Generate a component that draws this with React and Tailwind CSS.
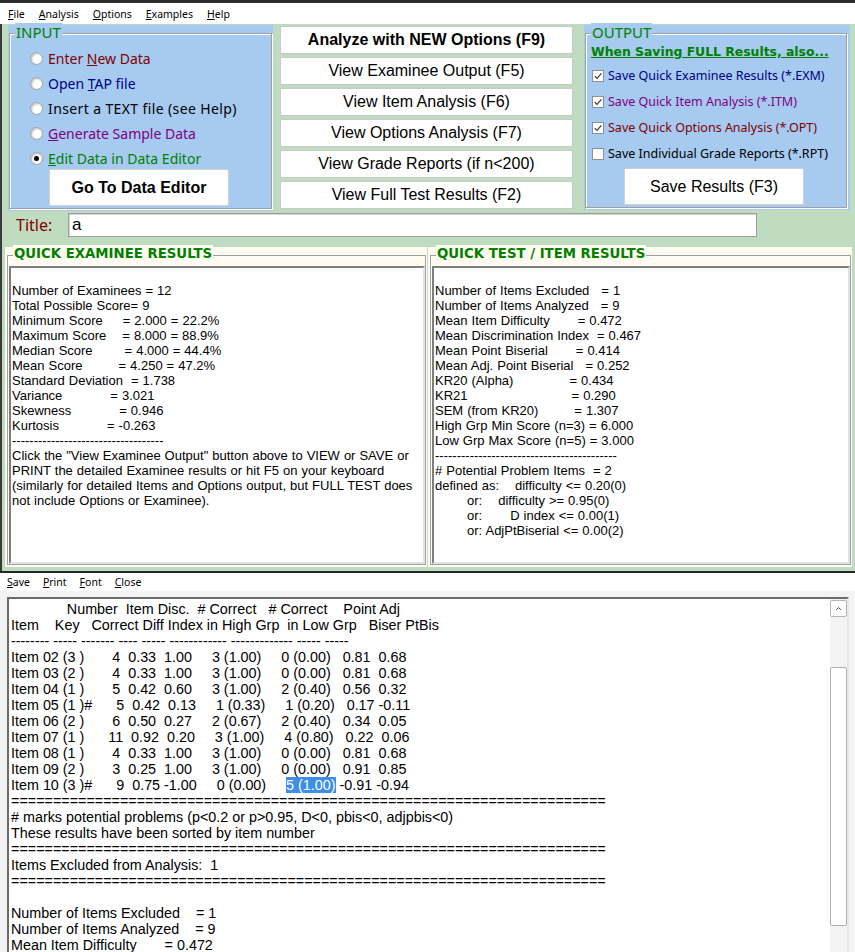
import React from "react";

const sp = (n) => " ".repeat(n);

const examLines = [
  "",
  "Number of Examinees = 12",
  "Total Possible Score= 9",
  "Minimum Score" + sp(5) + "= 2.000 = 22.2%",
  "Maximum Score" + sp(4) + "= 8.000 = 88.9%",
  "Median Score" + sp(8) + "= 4.000 = 44.4%",
  "Mean Score" + sp(9) + "= 4.250 = 47.2%",
  "Standard Deviation" + sp(2) + "= 1.738",
  "Variance" + sp(12) + "= 3.021",
  "Skewness" + sp(12) + "= 0.946",
  "Kurtosis" + sp(12) + "= -0.263",
  "-".repeat(35),
  'Click the "View Examinee Output" button above to VIEW or SAVE or',
  "PRINT the detailed Examinee results or hit F5 on your keyboard",
  "(similarly for detailed Items and Options output, but FULL TEST does",
  "not include Options or Examinee).",
];

const testLines = [
  "",
  "Number of Items Excluded" + sp(3) + "= 1",
  "Number of Items Analyzed" + sp(3) + "= 9",
  "Mean Item Difficulty" + sp(7) + "= 0.472",
  "Mean Discrimination Index" + sp(2) + "= 0.467",
  "Mean Point Biserial" + sp(7) + "= 0.414",
  "Mean Adj. Point Biserial" + sp(3) + "= 0.252",
  "KR20 (Alpha)" + sp(14) + "= 0.434",
  "KR21" + sp(26) + "= 0.290",
  "SEM (from KR20)" + sp(9) + "= 1.307",
  "High Grp Min Score (n=3)" + sp(1) + "= 6.000",
  "Low Grp Max Score (n=5)" + sp(1) + "= 3.000",
  "-".repeat(42),
  "# Potential Problem Items" + sp(2) + "= 2",
  "defined as:" + sp(4) + "difficulty <= 0.20(0)",
  sp(8) + "or:" + sp(4) + "difficulty >= 0.95(0)",
  sp(8) + "or:" + sp(7) + "D index <= 0.00(1)",
  sp(8) + "or: AdjPtBiserial <= 0.00(2)",
];

const eq = "=".repeat(71);

const reportLines = [
  sp(14) + "Number" + sp(2) + "Item Disc." + sp(2) + "# Correct" + sp(3) + "# Correct" + sp(4) + "Point Adj",
  "Item" + sp(4) + "Key" + sp(3) + "Correct Diff Index in High Grp" + sp(2) + "in Low Grp" + sp(3) + "Biser PtBis",
  "-------- ----- ------- ---- ----- ------------ ------------- ----- -----",
  "Item 02 (3 )" + sp(7) + "4  0.33  1.00" + sp(5) + "3 (1.00)" + sp(5) + "0 (0.00)   0.81  0.68",
  "Item 03 (2 )" + sp(7) + "4  0.33  1.00" + sp(5) + "3 (1.00)" + sp(5) + "0 (0.00)   0.81  0.68",
  "Item 04 (1 )" + sp(7) + "5  0.42  0.60" + sp(5) + "3 (1.00)" + sp(5) + "2 (0.40)   0.56  0.32",
  "Item 05 (1 )#" + sp(6) + "5  0.42  0.13" + sp(5) + "1 (0.33)" + sp(5) + "1 (0.20)   0.17 -0.11",
  "Item 06 (2 )" + sp(7) + "6  0.50  0.27" + sp(5) + "2 (0.67)" + sp(5) + "2 (0.40)   0.34  0.05",
  "Item 07 (1 )" + sp(6) + "11  0.92  0.20" + sp(5) + "3 (1.00)" + sp(5) + "4 (0.80)   0.22  0.06",
  "Item 08 (1 )" + sp(7) + "4  0.33  1.00" + sp(5) + "3 (1.00)" + sp(5) + "0 (0.00)   0.81  0.68",
  "Item 09 (2 )" + sp(7) + "3  0.25  1.00" + sp(5) + "3 (1.00)" + sp(5) + "0 (0.00)   0.91  0.85",
  "HL",
  eq,
  "# marks potential problems (p<0.2 or p>0.95, D<0, pbis<0, adjpbis<0)",
  "These results have been sorted by item number",
  eq,
  "Items Excluded from Analysis:  1",
  eq,
  "",
  "Number of Items Excluded" + sp(4) + "= 1",
  "Number of Items Analyzed" + sp(4) + "= 9",
  "Mean Item Difficulty" + sp(7) + "= 0.472",
  "Mean Discrimination Index" + sp(2) + "= 0.467",
  "Mean Point Biserial" + sp(8) + "= 0.414",
];

function Radio({ on }) {
  return (
    <span className="flex h-[13px] w-[13px] shrink-0 items-center justify-center rounded-full border border-[#a3a3a3] bg-white shadow-[inset_1px_1px_2px_#bdbdbd]">
      {on && <span className="h-[5px] w-[5px] rounded-full bg-black" />}
    </span>
  );
}

function Check({ on }) {
  return (
    <span className="flex h-[12px] w-[12px] shrink-0 items-center justify-center border border-[#8f8f8f] bg-white">
      {on && (
        <svg width="10" height="10" viewBox="0 0 10 10">
          <path d="M1.8 5.2 L4 7.4 L8.4 2.4" fill="none" stroke="#333" strokeWidth="1.1" />
        </svg>
      )}
    </span>
  );
}

function Group({ title, bg, titleClass, outerClass, innerClass, children }) {
  return (
    <div className={`${bg} ${outerClass}`}>
      <div className={`relative h-full border border-[#a0a0a0] shadow-[inset_1px_1px_0_#ffffff,1px_1px_0_#ffffff] ${innerClass}`}>
        <span className={`absolute left-[5px] top-[-11px] px-[1px] ${bg} ${titleClass}`}>{title}</span>
        {children}
      </div>
    </div>
  );
}

function MenuItem({ first, rest }) {
  return (
    <span>
      <span className="underline underline-offset-[1px]">{first}</span>
      {rest}
    </span>
  );
}

function RadioRow({ on, color, children }) {
  return (
    <div className="flex h-[25px] items-center gap-[5px]">
      <Radio on={on} />
      <span className={`text-[14px] leading-[18px] ${color}`}>{children}</span>
    </div>
  );
}

function CheckRow({ on, color, children }) {
  return (
    <div className="ml-[1px] flex h-[26px] items-center gap-[4px]">
      <Check on={on} />
      <span className={`text-[12.5px] leading-[16px] ${color}`}>{children}</span>
    </div>
  );
}

function MidButton({ bold, children }) {
  return (
    <div
      className={`flex h-[28px] items-center justify-center rounded-[2px] border border-[#c9c9c9] bg-white text-[16px] leading-[18px] text-black font-['Liberation_Sans',Arial,sans-serif] ${bold ? "font-bold" : ""}`}
    >
      {children}
    </div>
  );
}

function QuickPanel({ title, lines, outerClass }) {
  return (
    <Group
      title={title}
      bg="bg-[#fffbf0]"
      outerClass={`h-[320px] pt-[8px] pl-[2px] pr-[1px] pb-[2px] ${outerClass}`}
      innerClass="pt-[10px] pl-[1px] pr-[0px] pb-[0px] flex flex-col"
      titleClass="font-['DejaVu_Sans',sans-serif] font-bold text-[13.3px] leading-[18px] text-[#008000] top-[-10px]"
    >
      <div className="flex-1 overflow-hidden border-2 border-t-[#7e7e7e] border-l-[#7e7e7e] border-b-[#e2e2e2] border-r-[#e2e2e2] bg-white pl-[1px] font-['Liberation_Sans',Arial,sans-serif] text-[13px] leading-[15px] text-black [word-spacing:0.39px]">
        {lines.map((l, i) => (
          <div key={i} className="h-[15px] whitespace-pre">
            {l}
          </div>
        ))}
      </div>
    </Group>
  );
}

export default function App() {
  return (
    <div className="flex h-[952px] w-[855px] flex-col overflow-hidden bg-white font-['Noto_Sans',sans-serif]">
      <div className="h-[3px] shrink-0 bg-[#2e2e2e]" />
      {/* top menu */}
      <div className="flex h-[21px] shrink-0 items-center gap-[14px] bg-white pl-[8px] pt-[1px] text-[10.5px] leading-[14px] text-black">
        <MenuItem first="F" rest="ile" />
        <MenuItem first="A" rest="nalysis" />
        <MenuItem first="O" rest="ptions" />
        <MenuItem first="E" rest="xamples" />
        <MenuItem first="H" rest="elp" />
      </div>

      {/* main window */}
      <div className="flex h-[547px] shrink-0 flex-col border-l-2 border-[#3a3a3a] bg-[#c0dcc0]">
        <div className="flex items-start pt-[1px]">
          {/* INPUT */}
          <Group
            title="INPUT"
            bg="bg-[#a6caf0]"
            outerClass="ml-[6px] h-[186px] w-[265px] pt-[8px] pl-[1px] pr-[1px] pb-[2px]"
            innerClass="pt-[12px] pl-[20px]"
            titleClass="text-[15px] leading-[18px] text-[#008000]"
          >
            <RadioRow color="text-[#800000]">
              Enter <span className="underline">N</span>ew Data
            </RadioRow>
            <RadioRow color="text-[#000080]">
              Open <span className="underline">T</span>AP file
            </RadioRow>
            <RadioRow color="text-black tracking-[0.38px]">Insert a TEXT file (see Help)</RadioRow>
            <RadioRow color="text-[#800080]">
              <span className="underline">G</span>enerate Sample Data
            </RadioRow>
            <RadioRow on color="text-[#008000]">
              <span className="underline">E</span>dit Data in Data Editor
            </RadioRow>
            <div className="ml-[19px] mt-[-2px] flex h-[37px] w-[180px] items-center justify-center rounded-[2px] border border-[#d0d0d0] bg-white font-['Liberation_Sans',Arial,sans-serif] text-[16px] font-bold text-black">
              Go To Data Editor
            </div>
          </Group>

          {/* buttons */}
          <div className="ml-[7px] flex w-[293px] flex-col gap-[3px] pt-[1px]">
            <MidButton bold>Analyze with NEW Options (F9)</MidButton>
            <MidButton>View Examinee Output (F5)</MidButton>
            <MidButton>View Item Analysis (F6)</MidButton>
            <MidButton>View Options Analysis (F7)</MidButton>
            <MidButton>View Grade Reports (if n&lt;200)</MidButton>
            <MidButton>View Full Test Results (F2)</MidButton>
          </div>

          {/* OUTPUT */}
          <Group
            title="OUTPUT"
            bg="bg-[#a6caf0]"
            outerClass="ml-[11px] h-[185px] w-[266px] pt-[8px] pl-[1px] pr-[3px] pb-[2px]"
            innerClass="pt-[7px] pl-[5px]"
            titleClass="text-[15px] leading-[18px] text-[#008000]"
          >
            <div className="flex h-[22px] items-center font-['DejaVu_Sans',sans-serif] text-[12.4px] font-bold text-[#008000] underline">
              When Saving FULL Results, also...
            </div>
            <CheckRow on color="text-[#000080]">Save Quick Examinee Results (*.EXM)</CheckRow>
            <CheckRow on color="text-[#800080]">Save Quick Item Analysis (*.ITM)</CheckRow>
            <CheckRow on color="text-[#800000]">Save Quick Options Analysis (*.OPT)</CheckRow>
            <CheckRow color="text-black">Save Individual Grade Reports (*.RPT)</CheckRow>
            <div className="ml-[33px] mt-[1px] flex h-[37px] w-[180px] items-center justify-center rounded-[2px] border border-[#d0d0d0] bg-white font-['Liberation_Sans',Arial,sans-serif] text-[16px] text-black">
              Save Results (F3)
            </div>
          </Group>
        </div>

        {/* title row */}
        <div className="mt-[2px] flex h-[24px] items-center">
          <span className="ml-[14px] w-[52px] text-[16px] leading-[20px] text-[#800000]">Title:</span>
          <div className="flex h-[24px] w-[689px] items-center border border-[#9c9c9c] bg-white pl-[3px] font-['Liberation_Sans',Arial,sans-serif] text-[17px] text-black shadow-[inset_1px_1px_0_#d8d8d8]">
            a
          </div>
        </div>

        {/* quick panels */}
        <div className="mt-[10px] flex">
          <QuickPanel title="QUICK EXAMINEE RESULTS" lines={examLines} outerClass="ml-[3px] w-[422px]" />
          <QuickPanel title="QUICK TEST / ITEM RESULTS" lines={testLines} outerClass="ml-[1px] w-[424px] pl-[2px]" />
        </div>
      </div>
      <div className="h-[2px] shrink-0 bg-[#262626]" />

      {/* bottom window */}
      <div className="flex flex-1 flex-col bg-[#f3f3f3]">
        <div className="flex h-[18px] items-center gap-[13px] bg-white pl-[7px] text-[10.5px] leading-[14px] text-black">
          <MenuItem first="S" rest="ave" />
          <MenuItem first="P" rest="rint" />
          <MenuItem first="F" rest="ont" />
          <MenuItem first="C" rest="lose" />
        </div>
        <div className="flex-1 pt-[6px] pl-[7px]">
          <div className="flex h-[400px] w-[842px] border-t-2 border-l-2 border-r-2 border-t-[#6b6b6b] border-l-[#6b6b6b] border-r-[#e6e6e6] bg-white">
            <div className="flex-1 overflow-hidden pt-[2px] pl-[2px] font-['Liberation_Sans',Arial,sans-serif] text-[14.35px] leading-[16px] text-black">
              {reportLines.map((l, i) =>
                l === "HL" ? (
                  <div key={i} className="h-[16px] whitespace-pre">
                    {"Item 10 (3 )#" + sp(6) + "9  0.75 -1.00" + sp(5) + "0 (0.00)" + sp(5)}
                    <span className="bg-[#3d8ee6] text-white">5 (1.00)</span>
                    {" -0.91 -0.94"}
                  </div>
                ) : (
                  <div key={i} className="h-[16px] whitespace-pre">
                    {l}
                  </div>
                )
              )}
            </div>
            <div className="flex w-[17px] flex-col bg-[#f3f3f3]">
              <div className="mt-[1px] flex h-[17px] w-[17px] items-center justify-center rounded-[2px] border border-[#b5b5b5] bg-white">
                <svg width="11" height="11" viewBox="0 0 11 11">
                  <path d="M3 7 L5.5 4.5 L8 7" fill="none" stroke="#555" strokeWidth="1" />
                </svg>
              </div>
              <div className="mt-[50px] h-[259px] w-[17px] rounded-[2px] border border-[#b0b0b0] bg-white" />
            </div>
          </div>
        </div>
      </div>
    </div>
  );
}
